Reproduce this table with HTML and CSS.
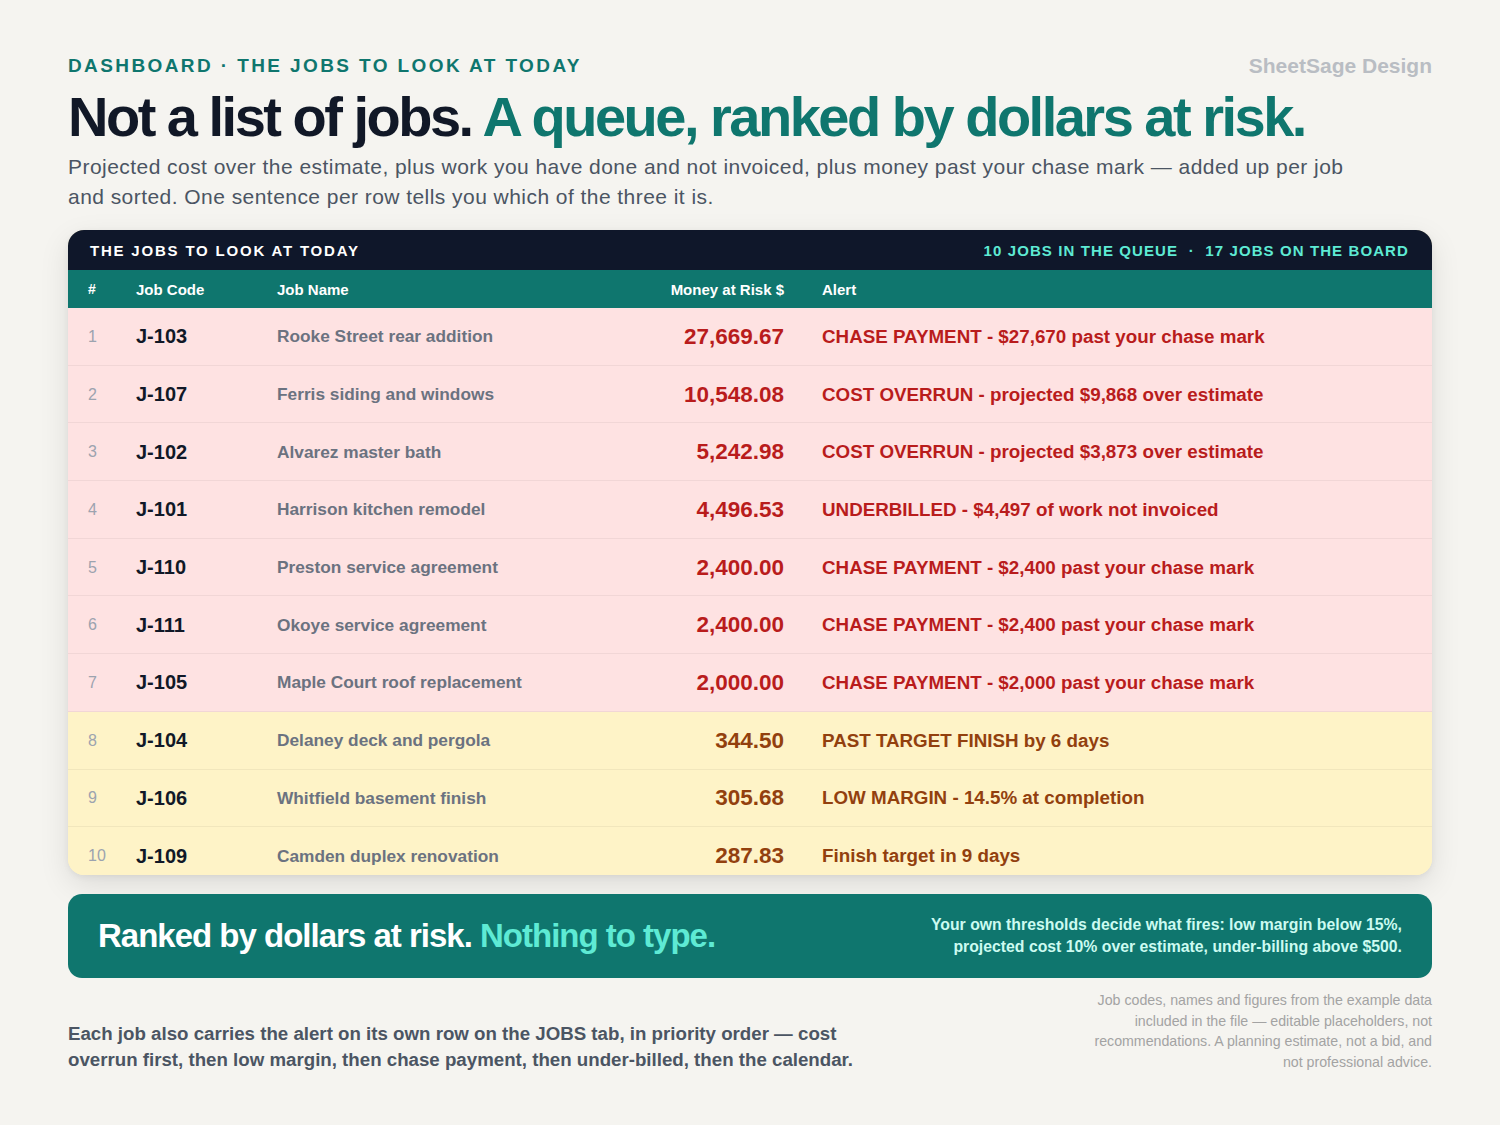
FILE: index.html
```html
<!DOCTYPE html>
<html lang="en">
<head>
<meta charset="utf-8">
<title>Dashboard - The jobs to look at today</title>
<link rel="stylesheet" href="styles.css">
</head>
<body>
<div class="page">
  <header class="top">
    <div class="topline">
      <div class="eyebrow">DASHBOARD · THE JOBS TO LOOK AT TODAY</div>
      <div class="brand">SheetSage Design</div>
    </div>
    <h1 class="title">Not a list of jobs. <span class="accent">A queue, ranked by dollars at risk.</span></h1>
    <p class="lede">Projected cost over the estimate, plus work you have done and not invoiced, plus money past your chase mark — added up per job and sorted. One sentence per row tells you which of the three it is.</p>
  </header>

  <section class="card">
    <div class="card-bar">
      <div class="bar-title">THE JOBS TO LOOK AT TODAY</div>
      <div class="bar-meta">10 JOBS IN THE QUEUE &nbsp;·&nbsp; 17 JOBS ON THE BOARD</div>
    </div>
    <div class="row head">
      <div class="c-num">#</div>
      <div class="c-code">Job Code</div>
      <div class="c-name">Job Name</div>
      <div class="c-money">Money at Risk $</div>
      <div class="c-alert">Alert</div>
    </div>
    <div class="row red">
      <div class="c-num">1</div><div class="c-code">J-103</div><div class="c-name">Rooke Street rear addition</div>
      <div class="c-money">27,669.67</div><div class="c-alert">CHASE PAYMENT - $27,670 past your chase mark</div>
    </div>
    <div class="row red">
      <div class="c-num">2</div><div class="c-code">J-107</div><div class="c-name">Ferris siding and windows</div>
      <div class="c-money">10,548.08</div><div class="c-alert">COST OVERRUN - projected $9,868 over estimate</div>
    </div>
    <div class="row red">
      <div class="c-num">3</div><div class="c-code">J-102</div><div class="c-name">Alvarez master bath</div>
      <div class="c-money">5,242.98</div><div class="c-alert">COST OVERRUN - projected $3,873 over estimate</div>
    </div>
    <div class="row red">
      <div class="c-num">4</div><div class="c-code">J-101</div><div class="c-name">Harrison kitchen remodel</div>
      <div class="c-money">4,496.53</div><div class="c-alert">UNDERBILLED - $4,497 of work not invoiced</div>
    </div>
    <div class="row red">
      <div class="c-num">5</div><div class="c-code">J-110</div><div class="c-name">Preston service agreement</div>
      <div class="c-money">2,400.00</div><div class="c-alert">CHASE PAYMENT - $2,400 past your chase mark</div>
    </div>
    <div class="row red">
      <div class="c-num">6</div><div class="c-code">J-111</div><div class="c-name">Okoye service agreement</div>
      <div class="c-money">2,400.00</div><div class="c-alert">CHASE PAYMENT - $2,400 past your chase mark</div>
    </div>
    <div class="row red">
      <div class="c-num">7</div><div class="c-code">J-105</div><div class="c-name">Maple Court roof replacement</div>
      <div class="c-money">2,000.00</div><div class="c-alert">CHASE PAYMENT - $2,000 past your chase mark</div>
    </div>
    <div class="row amber">
      <div class="c-num">8</div><div class="c-code">J-104</div><div class="c-name">Delaney deck and pergola</div>
      <div class="c-money">344.50</div><div class="c-alert">PAST TARGET FINISH by 6 days</div>
    </div>
    <div class="row amber">
      <div class="c-num">9</div><div class="c-code">J-106</div><div class="c-name">Whitfield basement finish</div>
      <div class="c-money">305.68</div><div class="c-alert">LOW MARGIN - 14.5% at completion</div>
    </div>
    <div class="row amber">
      <div class="c-num">10</div><div class="c-code">J-109</div><div class="c-name">Camden duplex renovation</div>
      <div class="c-money">287.83</div><div class="c-alert">Finish target in 9 days</div>
    </div>
  </section>

  <section class="banner">
    <div class="banner-head">Ranked by dollars at risk. <span class="mint">Nothing to type.</span></div>
    <div class="banner-note">Your own thresholds decide what fires: low margin below 15%,<br>projected cost 10% over estimate, under-billing above $500.</div>
  </section>

  <footer class="foot">
    <p class="foot-main">Each job also carries the alert on its own row on the JOBS tab, in priority order — cost overrun first, then low margin, then chase payment, then under-billed, then the calendar.</p>
    <p class="foot-fine">Job codes, names and figures from the example data included in the file — editable placeholders, not recommendations. A planning estimate, not a bid, and not professional advice.</p>
  </footer>
</div>
</body>
</html>
```

FILE: styles.css
```css
* { box-sizing: border-box; }
html, body { margin: 0; padding: 0; }
body {
  background: #f5f4f0;
  font-family: "Liberation Sans", Arial, sans-serif;
  color: #111827;
  width: 1500px;
  height: 1125px;
  overflow: hidden;
}
.page {
  padding: 54px 68px 0 68px;
}
.topline {
  display: flex;
  justify-content: space-between;
  align-items: center;
  height: 24px;
}
.eyebrow {
  font-size: 19px;
  font-weight: 700;
  letter-spacing: 2.4px;
  color: #0f766e;
}
.brand {
  font-size: 21px;
  font-weight: 700;
  color: #b9bdc3;
}
.title {
  margin: 6px 0 0 0;
  font-size: 56px;
  line-height: 66px;
  font-weight: 700;
  letter-spacing: -2.5px;
  color: #111827;
}
.accent { color: #0f766e; }
.lede {
  margin: 2px 0 0 0;
  font-size: 21px;
  line-height: 30px;
  letter-spacing: 0.45px;
  color: #4b5563;
  max-width: 1300px;
}

.card {
  margin-top: 18px;
  height: 645px;
  border-radius: 16px;
  overflow: hidden;
  background: #fef3c7;
  box-shadow: 0 10px 30px rgba(0,0,0,0.10), 0 2px 6px rgba(0,0,0,0.06);
}
.card-bar {
  height: 40px;
  background: #0f172a;
  display: flex;
  align-items: center;
  justify-content: space-between;
  padding: 0 23px 0 22px;
}
.bar-title {
  color: #ffffff;
  font-size: 15px;
  font-weight: 700;
  letter-spacing: 1.8px;
}
.bar-meta {
  color: #5eead4;
  font-size: 15px;
  font-weight: 700;
  letter-spacing: 1.1px;
}
.row {
  display: grid;
  grid-template-columns: 48px 141px 350px 157px 1fr;
  align-items: center;
  height: 57.7px;
  padding-left: 20px;
  padding-top: 1px;
  border-bottom: 1px solid rgba(0,0,0,0.05);
}
.row.head {
  height: 38px;
  padding-top: 0;
  background: #0f766e;
  color: #ffffff;
  font-size: 15px;
  font-weight: 700;
  border-bottom: none;
}
.row.head .c-num { color: #ffffff; font-size: 14px; }
.row.red { background: #fee2e2; }
.row.amber { background: #fef3c7; }
.c-num {
  color: #9ca3af;
  font-size: 16px;
}
.c-code {
  font-size: 20px;
  font-weight: 700;
  color: #111827;
}
.row.head .c-code { font-size: 15px; color: #ffffff; }
.c-name {
  font-size: 17.3px;
  font-weight: 700;
  color: #6b7280;
}
.row.head .c-name { font-size: 15px; color: #ffffff; }
.c-money {
  text-align: right;
  font-size: 22.5px;
  font-weight: 700;
}
.c-alert {
  padding-left: 38px;
  font-size: 18.8px;
  font-weight: 700;
  white-space: nowrap;
}
.row.head .c-money, .row.head .c-alert { font-size: 15px; color: #ffffff; }
.row.red .c-money, .row.red .c-alert { color: #b91c1c; }
.row.amber .c-money, .row.amber .c-alert { color: #92400e; }

.banner {
  margin-top: 19px;
  height: 84px;
  background: #0f766e;
  border-radius: 14px;
  display: flex;
  align-items: center;
  justify-content: space-between;
  padding: 0 30px;
}
.banner-head {
  color: #ffffff;
  font-size: 33px;
  font-weight: 700;
  letter-spacing: -1px;
}
.mint { color: #5eead4; }
.banner-note {
  color: #ccfbf1;
  font-size: 15.8px;
  font-weight: 700;
  line-height: 22px;
  text-align: right;
}

.foot {
  display: flex;
  justify-content: space-between;
  align-items: flex-start;
  margin-top: 12px;
}
.foot-main {
  margin: 31px 0 0 0;
  width: 820px;
  font-size: 18.7px;
  line-height: 26px;
  font-weight: 700;
  color: #4b5563;
}
.foot-fine {
  margin: 0;
  width: 350px;
  font-size: 14.2px;
  line-height: 20.5px;
  color: #a3a3a3;
  text-align: right;
}
```
